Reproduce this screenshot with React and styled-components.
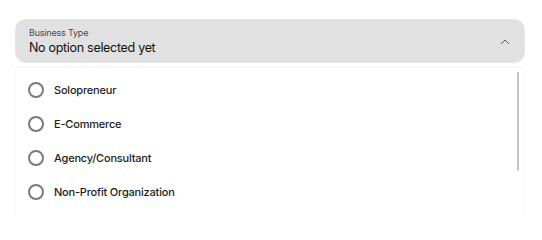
import styled, { createGlobalStyle } from "styled-components";

const GlobalStyle = createGlobalStyle`
  body {
    margin: 0;
    background: #ffffff;
    font-family: Inter, "Noto Sans", sans-serif;
  }
`;

const Page = styled.div`
  padding: 20px 18px 0 16px;
  width: 542px;
  box-sizing: border-box;
`;

const Field = styled.div`
  height: 42px;
  box-sizing: border-box;
  background: #e1e1e1;
  border-radius: 10px;
  padding: 7px 13px 0 13px;
  display: flex;
  align-items: center;
  justify-content: space-between;
  box-shadow: 0 0 0 1px #e6e6e6;
`;

const FieldText = styled.div`
  display: flex;
  flex-direction: column;
  align-self: flex-start;
  gap: 1px;
`;

const Label = styled.span`
  font-size: 9px;
  letter-spacing: -0.2px;
  color: #4a4a4a;
  line-height: 12px;
`;

const Value = styled.span`
  font-size: 12.5px;
  letter-spacing: -0.3px;
  color: #111;
  line-height: 16px;
`;

const Chevron = styled.svg`
  width: 12px;
  height: 12px;
  margin-bottom: 6px;
`;

const Panel = styled.div`
  margin-top: 6px;
  height: 147px;
  background: #fff;
  box-shadow: 0 -1px 3px rgba(0, 0, 0, 0.05), 0 1px 3px rgba(0, 0, 0, 0.04);
  position: relative;
  padding-top: 5px;
  box-sizing: border-box;
`;

const Scrollbar = styled.div`
  position: absolute;
  right: 5px;
  top: 4px;
  width: 2px;
  height: 99px;
  background: #c4c4c4;
  border-radius: 1px;
`;

const List = styled.ul`
  list-style: none;
  margin: 0;
  padding: 0 0 0 12px;
`;

const Option = styled.li`
  height: 34px;
  display: flex;
  align-items: center;
  gap: 10px;
`;

const Radio = styled.span`
  width: 12px;
  height: 12px;
  border: 2px solid #7a7a7a;
  border-radius: 50%;
  flex-shrink: 0;
`;

const OptionText = styled.span`
  font-size: 11px;
  letter-spacing: -0.2px;
  color: #1c1c1c;
  font-weight: 500;
`;

const options = [
  "Solopreneur",
  "E-Commerce",
  "Agency/Consultant",
  "Non-Profit Organization",
];

export default function App() {
  return (
    <>
      <GlobalStyle />
      <Page>
        <Field>
          <FieldText>
            <Label>Business Type</Label>
            <Value>No option selected yet</Value>
          </FieldText>
          <Chevron viewBox="0 0 12 12" fill="none">
            <path d="M2 8 L6 4 L10 8" stroke="#5c5c5c" strokeWidth="1" />
          </Chevron>
        </Field>
        <Panel>
          <Scrollbar />
          <List>
            {options.map((o) => (
              <Option key={o}>
                <Radio />
                <OptionText>{o}</OptionText>
              </Option>
            ))}
          </List>
        </Panel>
      </Page>
    </>
  );
}
